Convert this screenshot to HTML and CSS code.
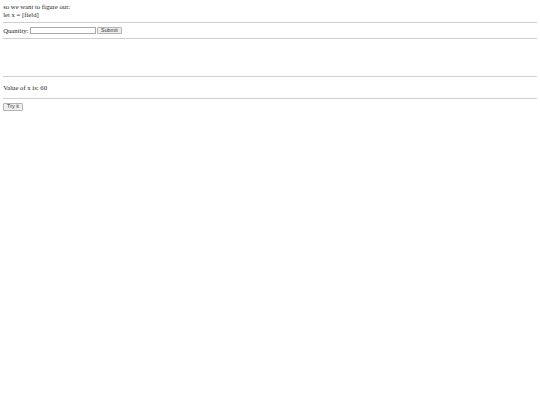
FILE: index.html
```html
<!DOCTYPE html>
<html>
<head>
<meta charset="utf-8">
<link rel="stylesheet" href="styles.css">
</head>
<body class="page">
<div class="intro">so we want to figure out:<br>let x = [field]</div>
<hr class="rule">
<form class="qty-form">
<label class="qty-label">Quantity:</label>
<input class="qty-input" type="text">
<button class="btn" type="button">Submit</button>
</form>
<hr class="rule">
<div class="spacer"></div>
<hr class="rule">
<div class="result">Value of x is: 60</div>
<hr class="rule rule-last">
<button class="btn btn-try" type="button">Try it</button>
</body>
</html>
```
FILE: styles.css
```css
html { background: #fff; }
.page {
  margin: 3.2px;
  font-family: "Liberation Serif", serif;
  font-size: 6.7px;
  line-height: 7.6px;
  color: #2a2a2a;
}
.intro { padding-top: 0.3px; }
.rule {
  margin: 3.2px 0;
  height: 0;
  border: 0;
  border-top: 1px solid #cfcfcf;
}
.rule-last { margin-bottom: 3.7px; }
.qty-form {
  display: flex;
  align-items: center;
  gap: 1.4px;
  height: 8.6px;
  margin: 0;
}
.qty-input {
  box-sizing: border-box;
  width: 66px;
  height: 7px;
  margin: 0;
  padding: 0;
  border: 0.8px solid #a9a9a9;
  border-radius: 0.6px;
  font-size: 5px;
  background: #fff;
}
.btn {
  box-sizing: border-box;
  height: 7px;
  margin: 0;
  padding: 0 2.8px;
  font-family: "Liberation Sans", Arial, sans-serif;
  font-size: 5.4px;
  line-height: 5px;
  color: #333;
  background: #efefef;
  border: 0.8px solid #b4b4b4;
  border-radius: 1px;
}
.btn-try { height: 7.4px; padding: 0 2.9px; }
.spacer { height: 30.6px; }
.result { padding: 3.6px 0 3.4px; }
```
